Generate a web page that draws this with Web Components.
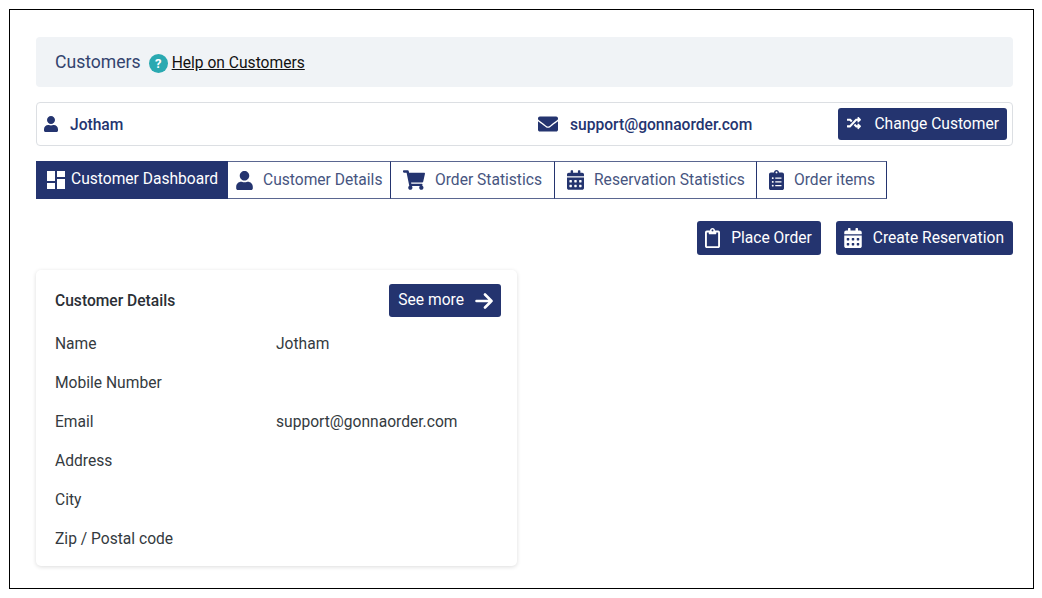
<!DOCTYPE html>
<html>
<head>
<meta charset="utf-8">
<title>Customers</title>
<style>
  html, body { margin: 0; background: #fff; }
  body { padding: 9px; font-family: Roboto, "Liberation Sans", sans-serif; font-size: 15.6px; }
</style>
</head>
<body>
<customers-page>
  <page-header title-text="Customers" help-text="Help on Customers"></page-header>
  <customer-bar name="Jotham" email="support@gonnaorder.com"></customer-bar>
  <nav-tabs>
    <tab-item icon="dashboard" active width="192" pad="10">Customer Dashboard</tab-item>
    <tab-item icon="user" width="163" pad="8">Customer Details</tab-item>
    <tab-item icon="cart" width="164" pad="12">Order Statistics</tab-item>
    <tab-item icon="calendar" width="202" pad="12">Reservation Statistics</tab-item>
    <tab-item icon="list" width="130" pad="12">Order items</tab-item>
  </nav-tabs>
  <action-row>
    <action-button icon="clipboard" gap="11">Place Order</action-button>
    <action-button icon="calendar" gap="11">Create Reservation</action-button>
  </action-row>
  <detail-card heading="Customer Details">
    <detail-row label="Name">Jotham</detail-row>
    <detail-row label="Mobile Number"></detail-row>
    <detail-row label="Email">support@gonnaorder.com</detail-row>
    <detail-row label="Address"></detail-row>
    <detail-row label="City"></detail-row>
    <detail-row label="Zip / Postal code"></detail-row>
  </detail-card>
</customers-page>

<script>
  const NAVY = '#24346f';

  // icon paths, keyed by name
  const ICONS = {
    user: ['0 0 448 512', 'M224 256c70.7 0 128-57.3 128-128S294.7 0 224 0 96 57.3 96 128s57.3 128 128 128zm89.6 32h-16.7c-22.2 10.2-46.9 16-72.9 16s-50.6-5.8-72.9-16h-16.7C60.2 288 0 348.2 0 422.4V464c0 26.5 21.5 48 48 48h352c26.5 0 48-21.5 48-48v-41.6c0-74.2-60.2-134.4-134.4-134.4z'],
    envelope: ['0 0 512 512', 'M502.3 190.8c3.9-3.1 9.7-.2 9.7 4.7V400c0 26.5-21.5 48-48 48H48c-26.5 0-48-21.5-48-48V195.6c0-5 5.7-7.8 9.7-4.7 22.4 17.4 52.1 39.5 154.1 113.6 21.1 15.4 56.7 47.8 92.2 47.6 35.7.3 72-32.8 92.3-47.6 102-74.1 131.6-96.3 154-113.7zM256 320c23.2.4 56.6-29.2 73.4-41.4 132.7-96.3 142.8-104.7 173.4-128.7 5.8-4.5 9.2-11.5 9.2-18.9v-19c0-26.5-21.5-48-48-48H48C21.5 64 0 85.5 0 112v19c0 7.4 3.4 14.3 9.2 18.9 30.6 23.9 40.7 32.4 173.4 128.7 16.8 12.2 50.2 41.8 73.4 41.4z'],
    random: ['0 0 512 512', 'M504.971 359.029c9.373 9.373 9.373 24.569 0 33.941l-80 79.984c-15.01 15.01-40.971 4.49-40.971-16.971V416h-58.785a12.004 12.004 0 0 1-8.773-3.812l-70.556-75.596 53.333-57.143L352 336h32v-39.981c0-21.438 25.943-31.998 40.971-16.971l80 79.981zM12 176h84l52.781 56.551 53.333-57.143-70.556-75.596A11.999 11.999 0 0 0 122.785 96H12c-6.627 0-12 5.373-12 12v56c0 6.627 5.373 12 12 12zm372 0v39.984c0 21.46 25.961 31.98 40.971 16.971l80-79.984c9.373-9.373 9.373-24.569 0-33.941l-80-79.981C409.943 24.021 384 34.582 384 56.019V96h-58.785a12.004 12.004 0 0 0-8.773 3.812L96 336H12c-6.627 0-12 5.373-12 12v56c0 6.627 5.373 12 12 12h110.785c3.326 0 6.503-1.381 8.773-3.812L352 176h32z'],
    cart: ['0 0 576 512', 'M528.12 301.319l47.273-208C578.806 78.301 567.391 64 551.99 64H159.208l-9.166-44.81C147.758 8.021 137.93 0 126.529 0H24C10.745 0 0 10.745 0 24v16c0 13.255 10.745 24 24 24h69.883l70.248 343.435C147.325 417.1 136 435.222 136 456c0 30.928 25.072 56 56 56s56-25.072 56-56c0-15.674-6.447-29.835-16.824-40h209.647C430.447 426.165 424 440.326 424 456c0 30.928 25.072 56 56 56s56-25.072 56-56c0-22.172-12.888-41.332-31.579-50.405l5.517-24.276c3.413-15.018-8.002-29.319-23.403-29.319H218.117l-6.545-32h293.145c11.206 0 20.92-7.754 23.403-18.681z'],
    calendar: ['0 0 448 512', 'M0 464c0 26.5 21.5 48 48 48h352c26.5 0 48-21.5 48-48V192H0v272zm320-196c0-6.6 5.4-12 12-12h40c6.6 0 12 5.4 12 12v40c0 6.6-5.4 12-12 12h-40c-6.6 0-12-5.4-12-12v-40zm0 128c0-6.6 5.4-12 12-12h40c6.6 0 12 5.4 12 12v40c0 6.6-5.4 12-12 12h-40c-6.6 0-12-5.4-12-12v-40zM192 268c0-6.6 5.4-12 12-12h40c6.6 0 12 5.4 12 12v40c0 6.6-5.4 12-12 12h-40c-6.6 0-12-5.4-12-12v-40zm0 128c0-6.6 5.4-12 12-12h40c6.6 0 12 5.4 12 12v40c0 6.6-5.4 12-12 12h-40c-6.6 0-12-5.4-12-12v-40zM64 268c0-6.6 5.4-12 12-12h40c6.6 0 12 5.4 12 12v40c0 6.6-5.4 12-12 12H76c-6.6 0-12-5.4-12-12v-40zm0 128c0-6.6 5.4-12 12-12h40c6.6 0 12 5.4 12 12v40c0 6.6-5.4 12-12 12H76c-6.6 0-12-5.4-12-12v-40zM400 64h-48V16c0-8.8-7.2-16-16-16h-32c-8.8 0-16 7.2-16 16v48H160V16c0-8.8-7.2-16-16-16h-32c-8.8 0-16 7.2-16 16v48H48C21.5 64 0 85.5 0 112v48h448v-48c0-26.5-21.5-48-48-48z'],
    list: ['0 0 384 512', 'M336 64h-80c0-35.3-28.7-64-64-64s-64 28.7-64 64H48C21.5 64 0 85.5 0 112v352c0 26.5 21.5 48 48 48h288c26.5 0 48-21.5 48-48V112c0-26.5-21.5-48-48-48zM96 424c-13.3 0-24-10.7-24-24s10.7-24 24-24 24 10.7 24 24-10.7 24-24 24zm0-96c-13.3 0-24-10.7-24-24s10.7-24 24-24 24 10.7 24 24-10.7 24-24 24zm0-96c-13.3 0-24-10.7-24-24s10.7-24 24-24 24 10.7 24 24-10.7 24-24 24zm96-192c13.3 0 24 10.7 24 24s-10.7 24-24 24-24-10.7-24-24 10.7-24 24-24zm128 368c0 4.4-3.6 8-8 8H168c-4.4 0-8-3.6-8-8v-16c0-4.4 3.6-8 8-8h144c4.4 0 8 3.6 8 8v16zm0-96c0 4.4-3.6 8-8 8H168c-4.4 0-8-3.6-8-8v-16c0-4.4 3.6-8 8-8h144c4.4 0 8 3.6 8 8v16zm0-96c0 4.4-3.6 8-8 8H168c-4.4 0-8-3.6-8-8v-16c0-4.4 3.6-8 8-8h144c4.4 0 8 3.6 8 8v16z'],
    clipboard: ['0 0 384 512', 'M336 64h-80c0-35.3-28.7-64-64-64s-64 28.7-64 64H48C21.5 64 0 85.5 0 112v352c0 26.5 21.5 48 48 48h288c26.5 0 48-21.5 48-48V112c0-26.5-21.5-48-48-48zM192 40c13.3 0 24 10.7 24 24s-10.7 24-24 24-24-10.7-24-24 10.7-24 24-24zm144 418c0 3.3-2.7 6-6 6H54c-3.3 0-6-2.7-6-6V118c0-3.3 2.7-6 6-6h42v36c0 6.6 5.4 12 12 12h168c6.6 0 12-5.4 12-12v-36h42c3.3 0 6 2.7 6 6z'],
    dashboard: ['0 0 18 18', 'M0 0h8v10H0zM10 0h8v6h-8zM0 12h8v6H0zM10 8h8v10h-8z']
  };

  function iconSvg(name, width, height) {
    const [box, d] = ICONS[name];
    return `<svg width="${width}" height="${height}" viewBox="${box}" fill="currentColor" aria-hidden="true"><path d="${d}"/></svg>`;
  }

  class CustomersPage extends HTMLElement {
    constructor() {
      super();
      const shadow = this.attachShadow({ mode: 'open' });
      shadow.innerHTML = `
      <style>
        :host {
          display: flex;
          flex-direction: column;
          box-sizing: border-box;
          width: 1025px;
          height: 580px;
          border: 1px solid #000;
          padding: 27px 20px 0 26px;
          color: #212529;
        }
      </style>
      <slot></slot>`;
    }
  }

  class PageHeader extends HTMLElement {
    constructor() {
      super();
      const shadow = this.attachShadow({ mode: 'open' });
      shadow.innerHTML = `
      <style>
        :host {
          display: flex;
          align-items: center;
          height: 50px;
          padding: 0 19px;
          background: #f0f3f6;
          border-radius: 4px;
          margin-bottom: 15px;
        }
        .title { font-size: 17.6px; color: #33436e; margin-right: 8px; margin-bottom: 1px; }
        .help {
          width: 19px; height: 19px; border-radius: 50%;
          background: #2aa9b1; color: #fff;
          font-size: 13px; font-weight: 700; line-height: 19px; text-align: center;
          margin: 2px 4px 0 0;
        }
        a { color: #111; text-decoration: underline; margin-top: 2px; }
      </style>
      <span class="title">${this.getAttribute('title-text')}</span>
      <span class="help">?</span>
      <a href="#">${this.getAttribute('help-text')}</a>`;
    }
  }

  class CustomerBar extends HTMLElement {
    constructor() {
      super();
      const shadow = this.attachShadow({ mode: 'open' });
      shadow.innerHTML = `
      <style>
        :host {
          display: grid;
          grid-template-columns: 494px 1fr auto;
          align-items: center;
          box-sizing: border-box;
          height: 44px;
          padding: 0 5px 0 7px;
          border: 1px solid #dcdfe3;
          border-radius: 4px;
          margin-bottom: 15px;
          color: ${NAVY};
          font-weight: 500;
        }
        .cell { display: flex; align-items: center; }
        .cell svg { margin-right: 12px; }
        .cell span { margin-top: 2px; }
      </style>
      <div class="cell name">${iconSvg('user', 14, 16)}<span>${this.getAttribute('name')}</span></div>
      <div class="cell mail">${iconSvg('envelope', 20, 20)}<span>${this.getAttribute('email')}</span></div>
      <action-button icon="random" gap="12" short>Change Customer</action-button>`;
    }
  }

  class NavTabs extends HTMLElement {
    constructor() {
      super();
      const shadow = this.attachShadow({ mode: 'open' });
      shadow.innerHTML = `
      <style>
        :host { display: flex; height: 38px; margin-bottom: 22px; }
      </style>
      <slot></slot>`;
    }
  }

  class TabItem extends HTMLElement {
    constructor() {
      super();
      const shadow = this.attachShadow({ mode: 'open' });
      const active = this.hasAttribute('active');
      const icon = this.getAttribute('icon');
      const size = { dashboard: [18, 18], user: [17, 19], cart: [22, 20], calendar: [17, 20], list: [15, 20] }[icon];
      shadow.innerHTML = `
      <style>
        :host {
          display: flex;
          align-items: center;
          box-sizing: border-box;
          width: ${this.getAttribute('width')}px;
          height: 38px;
          padding-left: ${this.getAttribute('pad')}px;
          border: 1px solid #5a6690;
          border-left-width: ${active ? 1 : 0}px;
          border-right-color: ${NAVY};
          background: ${active ? NAVY : '#fff'};
          color: ${active ? '#fff' : '#47557f'};
          white-space: nowrap;
        }
        :host([active]) { border-color: ${NAVY}; }
        svg { color: ${active ? '#fff' : NAVY}; margin-right: ${active ? 6 : 10}px; flex: none; }
        .label { margin-top: ${active ? -2 : 0}px; }
      </style>
      ${iconSvg(icon, size[0], size[1])}<span class="label"><slot></slot></span>`;
    }
  }

  class ActionRow extends HTMLElement {
    constructor() {
      super();
      const shadow = this.attachShadow({ mode: 'open' });
      shadow.innerHTML = `
      <style>
        :host { display: flex; justify-content: flex-end; gap: 15px; margin-bottom: 15px; }
      </style>
      <slot></slot>`;
    }
  }

  class ActionButton extends HTMLElement {
    constructor() {
      super();
      const shadow = this.attachShadow({ mode: 'open' });
      const icon = this.getAttribute('icon');
      const size = { random: [16, 14], clipboard: [15, 20], calendar: [18, 20] }[icon];
      shadow.innerHTML = `
      <style>
        :host {
          display: inline-flex;
          align-items: center;
          box-sizing: border-box;
          height: ${this.hasAttribute('short') ? 32 : 34}px;
          padding: 0 ${this.hasAttribute('short') ? 8 : 9}px 0 8px;
          background: ${NAVY};
          color: #fff;
          border-radius: 3px;
          font-weight: 400;
          white-space: nowrap;
        }
        svg { margin-right: ${this.getAttribute('gap')}px; flex: none; }
        :host([short]) svg { margin-top: -3px; }
      </style>
      ${iconSvg(icon, size[0], size[1])}<span><slot></slot></span>`;
    }
  }

  class DetailCard extends HTMLElement {
    constructor() {
      super();
      const shadow = this.attachShadow({ mode: 'open' });
      shadow.innerHTML = `
      <style>
        :host {
          display: block;
          box-sizing: border-box;
          width: 481px;
          height: 296px;
          padding: 14px 16px 0 19px;
          border-radius: 5px;
          background: #fff;
          box-shadow: 0 1px 4px rgba(0, 0, 0, .14);
          color: #343a40;
        }
        header {
          display: flex;
          justify-content: space-between;
          align-items: center;
          height: 33px;
          margin-bottom: 7px;
        }
        h2 { margin: 0; font-size: 15.6px; font-weight: 500; color: #2b2f36; }
        .more {
          display: flex; align-items: center;
          height: 33px; box-sizing: border-box;
          padding: 0 8px 0 9px;
          background: ${NAVY}; color: #fff;
          border-radius: 3px;
        }
        .more span { margin-top: -2px; }
        .more svg { margin-left: 11px; }
      </style>
      <header>
        <h2>${this.getAttribute('heading')}</h2>
        <div class="more"><span>See more</span>
          <svg width="18" height="16" viewBox="0 0 18 16" fill="none" stroke="currentColor" stroke-width="2.6" stroke-linecap="round" stroke-linejoin="round"><path d="M1.5 8h15M10 1.5 16.5 8 10 14.5"/></svg>
        </div>
      </header>
      <slot></slot>`;
    }
  }

  class DetailRow extends HTMLElement {
    constructor() {
      super();
      const shadow = this.attachShadow({ mode: 'open' });
      shadow.innerHTML = `
      <style>
        :host {
          display: grid;
          grid-template-columns: 221px 1fr;
          align-items: center;
          height: 39px;
        }
      </style>
      <span>${this.getAttribute('label')}</span>
      <span><slot></slot></span>`;
    }
  }

  customElements.define('customers-page', CustomersPage);
  customElements.define('page-header', PageHeader);
  customElements.define('customer-bar', CustomerBar);
  customElements.define('nav-tabs', NavTabs);
  customElements.define('tab-item', TabItem);
  customElements.define('action-row', ActionRow);
  customElements.define('action-button', ActionButton);
  customElements.define('detail-card', DetailCard);
  customElements.define('detail-row', DetailRow);
</script>
</body>
</html>
